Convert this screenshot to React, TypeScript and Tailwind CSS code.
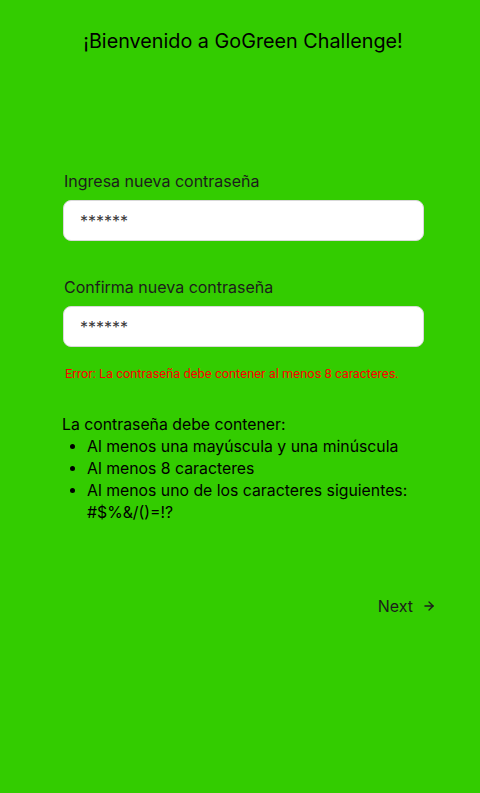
import React from 'react';
import { ArrowRight } from 'lucide-react';

function PasswordField({ label }: { label: string }) {
  return (
    <div className="flex flex-col">
      <label className="text-[16px] leading-[24px] text-[#1c1c1c] pl-[1px]">{label}</label>
      <div className="mt-[7px] h-[41px] w-[361px] rounded-[8px] border border-[#d9d9d9] bg-white flex items-center pl-[16px]">
        <span className="text-[16px] text-[#3a3a3a]">******</span>
      </div>
    </div>
  );
}

export default function App() {
  return (
    <div className="min-h-[793px] w-full bg-[#33cc00] font-['Inter',sans-serif] text-black">
      <h1 className="pt-[28px] pl-[6px] text-center text-[19.8px] leading-[26px]">¡Bienvenido a GoGreen Challenge!</h1>

      <div className="mt-[115px] pl-[63px] flex flex-col">
        <PasswordField label="Ingresa nueva contraseña" />
        <div className="mt-[34px]">
          <PasswordField label="Confirma nueva contraseña" />
        </div>
        <p className="mt-[19px] pl-[2px] text-[12.9px] leading-[16px] text-[#ff0000] font-['Roboto',sans-serif]">
          Error: La contraseña debe contener al menos 8 caracteres.
        </p>
      </div>

      <div className="mt-[32px] pl-[62px] text-[15.8px] leading-[22px]">
        <p>La contraseña debe contener:</p>
        <ul className="list-disc pl-[25px]">
          <li>Al menos una mayúscula y una minúscula</li>
          <li>Al menos 8 caracteres</li>
          <li className="w-[340px]">Al menos uno de los caracteres siguientes: #$%&amp;/()=!?</li>
        </ul>
      </div>

      <div className="mt-[71px] flex justify-end pr-[44px]">
        <button className="flex items-center gap-[9px] text-[16px] leading-[22px] text-[#1c1c1c]">
          Next
          <ArrowRight size={14} strokeWidth={2.25} />
        </button>
      </div>
    </div>
  );
}
